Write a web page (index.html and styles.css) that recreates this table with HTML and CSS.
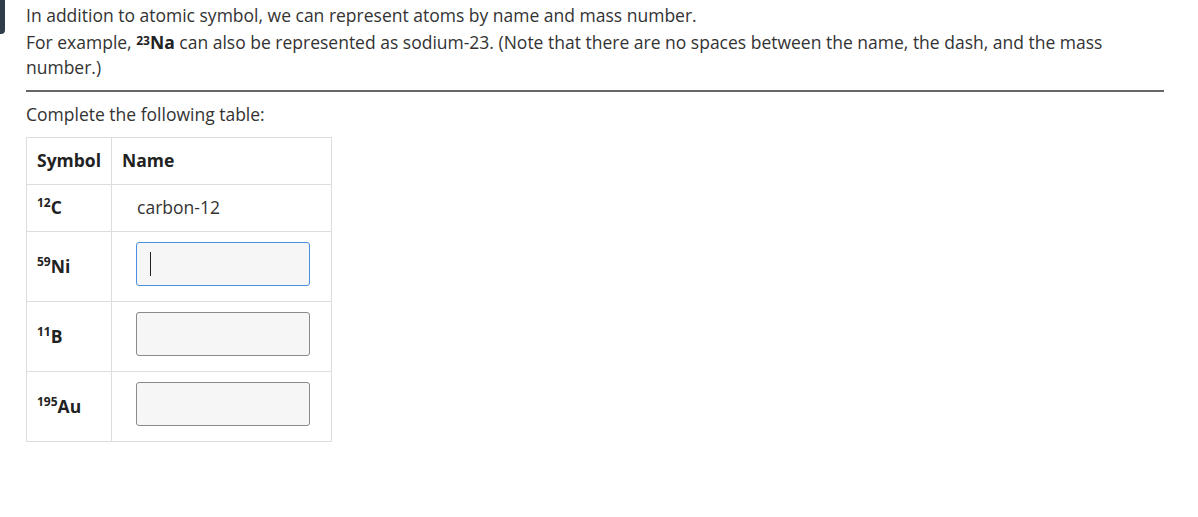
FILE: index.html
```html
<!DOCTYPE html>
<html lang="en">
<head>
<meta charset="utf-8">
<title>Atoms by name and mass number</title>
<link rel="stylesheet" href="styles.css">
</head>
<body>
<div class="tab"></div>
<main class="question">
  <div class="intro">
    <p class="line">In addition to atomic symbol, we can represent atoms by name and mass number.</p>
    <p class="line second">For example, <b class="iso"><sup>23</sup>Na</b> can also be represented as sodium-23. (Note that there are no spaces between the name, the dash, and the mass number.)</p>
  </div>
  <hr class="rule">
  <p class="prompt">Complete the following table:</p>
  <table class="atoms">
    <thead>
      <tr><th class="c-sym">Symbol</th><th class="c-name">Name</th></tr>
    </thead>
    <tbody>
      <tr><td class="sym"><sup>12</sup>C</td><td class="given">carbon-12</td></tr>
      <tr><td class="sym"><sup>59</sup>Ni</td><td class="entry"><span class="field"><input class="box focused" type="text"><span class="caret"></span></span></td></tr>
      <tr><td class="sym"><sup>11</sup>B</td><td class="entry"><span class="field"><input class="box" type="text"></span></td></tr>
      <tr><td class="sym"><sup>195</sup>Au</td><td class="entry"><span class="field"><input class="box" type="text"></span></td></tr>
    </tbody>
  </table>
</main>
</body>
</html>
```

FILE: styles.css
```css
html, body {
  margin: 0;
  padding: 0;
  background: #ffffff;
}
body {
  font-family: "Open Sans", "Noto Sans", sans-serif;
  font-size: 17.5px;
  line-height: 25px;
  color: #333333;
  position: relative;
}
.tab {
  position: absolute;
  left: 0;
  top: 0;
  width: 5px;
  height: 34px;
  background: #2f3d4b;
  border-bottom-right-radius: 4px;
}
.question {
  width: 1138px;
  padding: 3px 0 0 26px;
}
.line {
  margin: 0;
}
.second {
  margin-top: 2px;
}
.iso {
  font-weight: 700;
  color: #222;
}
.iso sup, .sym sup {
  font-size: 12px;
  line-height: 0;
  font-weight: 700;
}
.iso sup {
  vertical-align: 4px;
}
.sym sup {
  vertical-align: 7px;
}
.rule {
  margin: 10px 0 0 0;
  border: 0;
  height: 2px;
  background: #666666;
}
.prompt {
  margin: 10px 0 10px 0;
}
.atoms {
  border-collapse: collapse;
  width: 306px;
}
.atoms th, .atoms td {
  border: 1px solid #dddddd;
  text-align: left;
  padding: 10px 10px 11px 10px;
}
.atoms th {
  font-weight: 700;
  color: #222;
}
.c-sym {
  width: 64px;
}
.sym {
  font-weight: 700;
  color: #222;
  vertical-align: middle;
}
.given {
  padding-left: 25px !important;
}
.entry {
  padding: 10px 21px 15px 24px !important;
}
.field {
  position: relative;
  display: block;
  width: 174px;
  height: 44px;
}
.box {
  box-sizing: border-box;
  display: block;
  width: 174px;
  height: 44px;
  margin: 0;
  border: 1px solid #8a8a8a;
  border-radius: 3px;
  background: #f6f6f6;
  font-family: inherit;
  font-size: 16px;
  outline: none;
}
.box.focused {
  border-color: #4a8fe0;
}
.caret {
  position: absolute;
  left: 14px;
  top: 10px;
  width: 1px;
  height: 24px;
  background: #222;
}
```
